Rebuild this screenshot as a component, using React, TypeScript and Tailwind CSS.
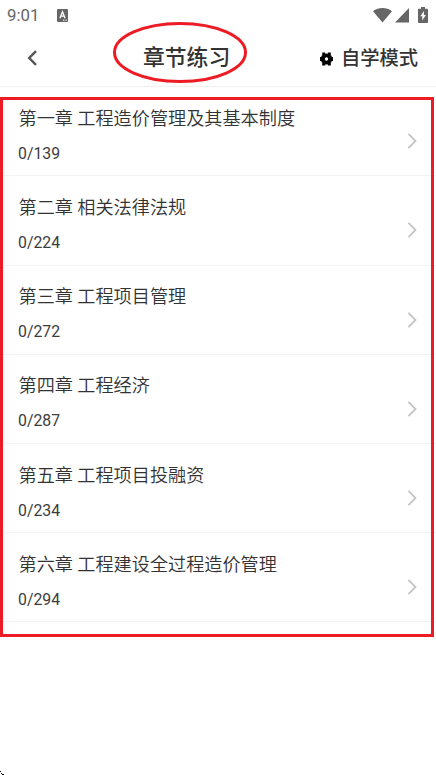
interface Chapter {
  title: string;
  done: number;
  total: number;
}

const chapters: Chapter[] = [
  { title: '第一章 工程造价管理及其基本制度', done: 0, total: 139 },
  { title: '第二章 相关法律法规', done: 0, total: 224 },
  { title: '第三章 工程项目管理', done: 0, total: 272 },
  { title: '第四章 工程经济', done: 0, total: 287 },
  { title: '第五章 工程项目投融资', done: 0, total: 234 },
  { title: '第六章 工程建设全过程造价管理', done: 0, total: 294 }
];

function StatusBar() {
  return (
    <div className="flex h-[30px] items-center justify-between pl-[7px] pr-2 text-[#666666]">
      <div className="flex items-center">
        <span className="w-[50px] text-[16.8px] leading-5">9:01</span>
        <svg width="11" height="13" viewBox="0 0 11 13">
          <rect width="11" height="13" rx="1" fill="#666666" />
          <path d="M2.9 9.2 5.5 2.8 8.1 9.2M3.8 7.2h3.4" fill="none" stroke="#fff" strokeWidth="1.3" />
          <path d="M6 11.2h4" stroke="#fff" strokeDasharray="1 .6" />
        </svg>
      </div>
      <div className="flex items-center">
        <svg width="19" height="15" viewBox="0 0 19 15" fill="#666666">
          <path d="M0 3.3C5.5-1.1 13.5-1.1 19 3.3L9.5 14.5Z" />
        </svg>
        <svg className="ml-[3px]" width="14" height="15" viewBox="0 0 14 15" fill="#666666">
          <path d="M14 0v14.5H0Z" />
        </svg>
        <svg className="ml-[9px]" width="10" height="16" viewBox="0 0 10 16">
          <path d="M3 0h4v1.7h2.2q.8 0 .8.8v12.7q0 .8-.8.8H.8q-.8 0-.8-.8V2.5q0-.8.8-.8H3Z" fill="#666666" />
          <path d="M6 4 2.3 9.3h2V13.5L7.9 8h-2Z" fill="#fff" />
        </svg>
      </div>
    </div>
  );
}

function GearIcon() {
  return (
    <svg className="-mt-px" width="13" height="14" viewBox="0 0 13 14">
      <circle cx="6.5" cy="7" r="3.6" fill="none" stroke="#000" strokeWidth="3.8" />
      <path d="M0 5h2v4H0ZM11 5h2v4h-2ZM2.2.6h3V3h-3ZM7.8.6h3V3h-3ZM2.2 11h3v2.4h-3ZM7.8 11h3v2.4h-3Z" />
      <path d="M1.6 3.6h2v7h-2ZM9.4 3.6h2v7h-2Z" />
    </svg>
  );
}

function Header() {
  return (
    <header className="grid h-[57px] grid-cols-[1fr_87px_1fr] items-center border-b border-[#f1f1f1] pl-[27px] pr-[18px]">
      <button type="button" aria-label="返回" className="w-3">
        <svg width="11" height="16" viewBox="0 0 11 16">
          <path d="M9 1.2 2.2 8 9 14.8" fill="none" stroke="#555555" strokeWidth="2.4" />
        </svg>
      </button>
      <div className="relative -left-9">
        <h1 className="text-[21.8px] font-medium leading-8 whitespace-nowrap text-[#333333]">章节练习</h1>
        <svg className="absolute -left-[31px] -top-[21px] max-w-none" width="136" height="64" viewBox="0 0 136 64">
          <ellipse cx="68" cy="31.5" rx="65.5" ry="29" fill="none" stroke="#ed1c24" strokeWidth="3" />
        </svg>
      </div>
      <button
        type="button"
        className="mt-0.5 flex items-center justify-self-end text-[19.3px] font-medium whitespace-nowrap text-[#333333]"
      >
        <GearIcon />
        <span className="ml-2 leading-8">自学模式</span>
      </button>
    </header>
  );
}

function ChapterRow({ title, done, total }: Chapter) {
  return (
    <li className="flex h-[89.2px] items-center justify-between border-b border-[#f3f3f3] pl-[18px] pr-[19px]">
      <div className="mt-[9px]">
        <p className="pl-[0.5px] text-[18.15px] font-[350] leading-[26px] text-[#333333]">{title}</p>
        <p className="mt-2.5 text-[15.8px] leading-6 text-[#3c3c3c]">
          {done}/{total}
        </p>
      </div>
      <svg className="mt-5" width="10" height="18" viewBox="0 0 10 18">
        <path d="M1.5 1.8 8.5 9 1.5 16.2" fill="none" stroke="#c4c4c4" strokeWidth="1.8" />
      </svg>
    </li>
  );
}

export default function App() {
  return (
    <div className="relative h-[775px] w-[436px] overflow-hidden bg-white font-[Roboto,'Noto_Sans_CJK_SC',sans-serif]">
      <StatusBar />
      <Header />
      <ul className="pt-[0.2px]">
        {chapters.map((chapter) => (
          <ChapterRow key={chapter.title} {...chapter} />
        ))}
      </ul>
      <div className="pointer-events-none absolute left-0 top-[97px] h-[540px] w-[434px] border-[3px] border-[#ed1c24]" />
      <svg className="absolute bottom-0 left-0" width="4" height="4" viewBox="0 0 4 4" fill="#000">
        <path d="M0 0h1v1H0ZM1 2h1v1H1ZM2 3h2v1H2Z" />
      </svg>
    </div>
  );
}
